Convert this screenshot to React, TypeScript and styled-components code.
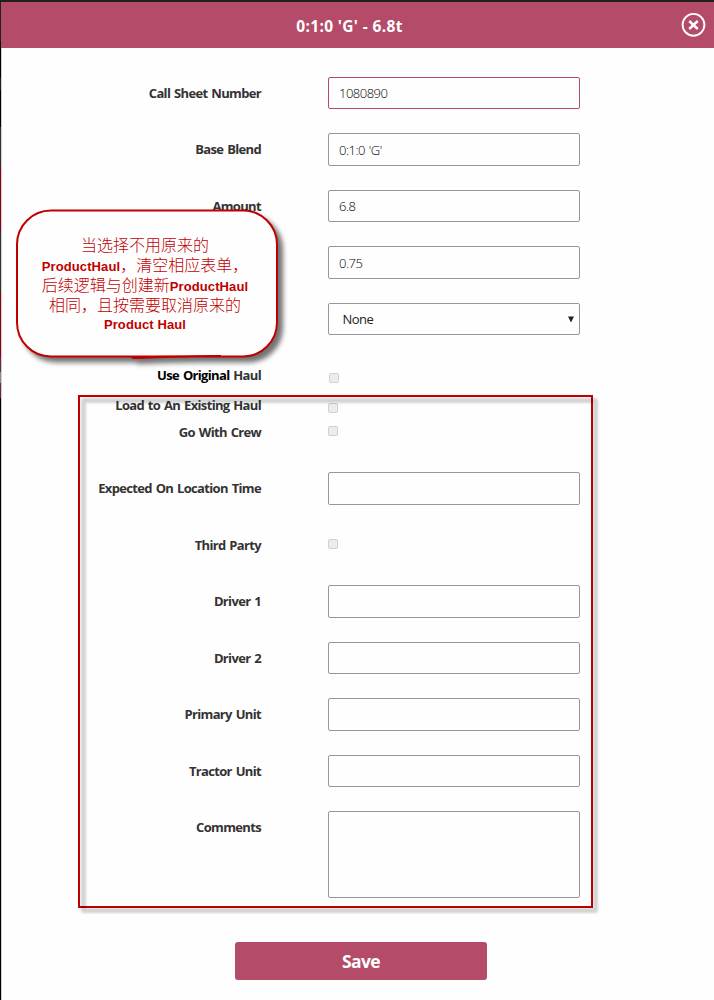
import React from 'react';
import styled, { createGlobalStyle, css } from 'styled-components';

const Global = createGlobalStyle`
  *, *::before, *::after { box-sizing: border-box; }
  body { margin: 0; background: #fefefe; font-family: "Open Sans", "Noto Sans", sans-serif; }
`;

const Page = styled.div`
  position: relative;
  width: 714px;
  height: 1000px;
  overflow: hidden;
  background: #fefefe;
  border-top: 2px solid #221e20;
`;

const Backdrop = styled.div`
  position: absolute;
  left: 0;
  top: 0;
  bottom: 0;
  width: 2px;
  border-right: 1px solid #d2cfcf;
  background: linear-gradient(#222 0 39px, #000 39px 76px, #222 76px 88px, #000 88px 125px, #333 125px 165px, #8c0012 165px 228px, #333 228px 290px, #8c0012 290px 355px, #6c2740 355px 370px, #888 370px 381px, #6c2740 381px 396px, #000 396px);
`;

const Header = styled.header`
  position: relative;
  height: 46px;
  margin-left: 1px;
  background: #b34b69;
  display: flex;
  align-items: center;
  justify-content: center;
`;

const Title = styled.h1`
  margin: 0 16px 0 0;
  padding-top: 1px;
  font-size: 15.5px;
  line-height: 22px;
  font-weight: 700;
  letter-spacing: 0.36px;
  color: #fff;
`;

const Close = styled.button`
  position: absolute;
  right: 8px;
  top: 10px;
  width: 25px;
  height: 25px;
  padding: 0;
  border: 0;
  background: none;
  svg { display: block; }
`;

const Form = styled.form`
  display: flex;
  flex-direction: column;
  padding-top: 28.8px;
`;

const Row = styled.div<{ $height?: number; $gap?: number }>`
  display: grid;
  grid-template-columns: 261px 252px;
  column-gap: 67px;
  height: ${p => p.$height ?? 32.5}px;
  margin-bottom: ${p => p.$gap ?? 24}px;
`;

const Label = styled.label<{ $tight?: boolean }>`
  text-align: right;
  white-space: nowrap;
  font-size: 13px;
  line-height: 18px;
  padding-top: ${p => (p.$tight ? 0 : 7)}px;
  margin-top: ${p => (p.$tight ? -1 : 0)}px;
  font-weight: 700;
  color: #333;
  letter-spacing: -0.66px;
  word-spacing: 1.1px;
`;

const Strong = styled.span`
  color: #000;
`;

const field = css`
  width: 252px;
  border: 1px solid #979797;
  border-radius: 2px;
  background: #fefefe;
  color: #222;
  font: 400 13px "Open Sans", "Noto Sans", sans-serif;
  outline: none;
`;

const Input = styled.input<{ $active?: boolean }>`
  ${field}
  height: 32.5px;
  padding: 0 10px;
  font-weight: 300;
  color: #000;
  letter-spacing: -0.5px;
  word-spacing: 1px;
  ${p => p.$active && 'border-color: #b34b69;'}
`;

const Select = styled.div`
  ${field}
  height: 32.5px;
  padding: 0 5px 0 13.5px;
  display: flex;
  align-items: center;
  justify-content: space-between;
  letter-spacing: -0.5px;
`;

const Area = styled.textarea`
  ${field}
  height: 86.5px;
  resize: none;
`;

const Check = styled.span<{ $top: number; $left?: number }>`
  width: 10px;
  height: 10px;
  margin-top: ${p => p.$top}px;
  margin-left: ${p => p.$left ?? 0}px;
  border: 1px solid #d0d0d0;
  border-radius: 2px;
  background: #ececec;
`;

const Save = styled.button`
  width: 252px;
  height: 38px;
  margin: 44.2px 0 0 235px;
  padding: 1px 0 0;
  border: 0;
  border-radius: 3px;
  background: #b34b69;
  color: #fff;
  font: 700 17.5px "Open Sans", "Noto Sans", sans-serif;
  letter-spacing: -0.6px;
`;

const Highlight = styled.div`
  position: absolute;
  left: 78px;
  top: 393px;
  width: 515px;
  height: 513px;
  border: 2px solid #c00000;

  &::before {
    content: '';
    position: absolute;
    z-index: -1;
    inset: 1px -7px -7px 1px;
    border: 5px solid rgba(0, 0, 0, 0.17);
    border-radius: 3px;
    filter: blur(1px);
  }
  isolation: isolate;
`;

const Callout = styled.div`
  position: absolute;
  left: 16px;
  top: 207px;
  width: 262px;
  height: 150px;
`;

const Bubble = styled.svg`
  position: absolute;
  left: 0;
  top: 0;
  overflow: visible;
  filter: drop-shadow(5px 5px 2.5px rgba(0, 0, 0, 0.55));
`;

const Note = styled.div`
  position: relative;
  padding-top: 27px;
  padding-right: 4px;
  color: #c00000;
  text-align: center;
  white-space: nowrap;
  font: 300 16px/20px "Liberation Sans", "Noto Sans CJK SC", sans-serif;
`;

const NoteLine = styled.div<{ $latin?: boolean }>`
  height: ${p => (p.$latin ? 16 : 20)}px;
  line-height: ${p => (p.$latin ? 16 : 20)}px;
  b { font-size: 13px; font-weight: 700; letter-spacing: 0.1px; }
`;

const fields = [
  { label: 'Call Sheet Number', value: '1080890', active: true },
  { label: 'Base Blend', value: "0:1:0 'G'" },
  { label: 'Amount', value: '6.8' },
  { label: '', value: '0.75' },
];

export default function App() {
  return (
    <Page>
      <Global />
      <Backdrop />
      <Header>
        <Title>0:1:0 'G' - 6.8t</Title>
        <Close aria-label="Close" type="button">
          <svg width="25" height="25" viewBox="0 0 25 25" fill="none" stroke="#fff">
            <circle cx="12.5" cy="12.8" r="10.9" strokeWidth="1.9" />
            <path d="M8.2 9l8.6 8M16.8 9l-8.6 8" strokeWidth="2.5" />
          </svg>
        </Close>
      </Header>
      <Form>
        {fields.map(f => (
          <Row key={f.value}>
            <Label>{f.label}</Label>
            <Input defaultValue={f.value} $active={f.active} />
          </Row>
        ))}
        <Row>
          <span />
          <Select>
            None
            <svg width="6" height="7" viewBox="0 0 6 7"><path d="M0 0.5h6L3 6.5z" fill="#222" /></svg>
          </Select>
        </Row>
        <Row $gap={5}>
          <Label><Strong>Use Original</Strong> Haul</Label>
          <Check $top={13.7} $left={1} />
        </Row>
        <Row $height={19} $gap={0}>
          <Label $tight>Load to An Existing Haul</Label>
          <Check $top={6.2} />
        </Row>
        <Row>
          <Label>Go With Crew</Label>
          <Check $top={10.2} />
        </Row>
        <Row>
          <Label>Expected On Location Time</Label>
          <Input />
        </Row>
        <Row>
          <Label>Third Party</Label>
          <Check $top={10.2} />
        </Row>
        {['Driver 1', 'Driver 2', 'Primary Unit', 'Tractor Unit'].map(l => (
          <Row key={l}>
            <Label>{l}</Label>
            <Input />
          </Row>
        ))}
        <Row $height={86.5} $gap={0}>
          <Label>Comments</Label>
          <Area />
        </Row>
        <Save type="button">Save</Save>
      </Form>
      <Highlight />
      <Callout>
        <Bubble width="262" height="150" viewBox="0 0 262 150">
          <rect x="1" y="1.5" width="260" height="146" rx="34" fill="#fefefe" stroke="#c00000" strokeWidth="2" />
          <path d="M115 147.8l90-1.2-88 3z" fill="#c00000" stroke="#c00000" />
        </Bubble>
        <Note>
          <NoteLine>当选择不用原来的</NoteLine>
          <NoteLine><b>ProductHaul</b>，清空相应表单，</NoteLine>
          <NoteLine>后续逻辑与创建新<b>ProductHaul</b></NoteLine>
          <NoteLine>相同，且按需要取消原来的</NoteLine>
          <NoteLine $latin><b>Product Haul</b></NoteLine>
        </Note>
      </Callout>
    </Page>
  );
}
